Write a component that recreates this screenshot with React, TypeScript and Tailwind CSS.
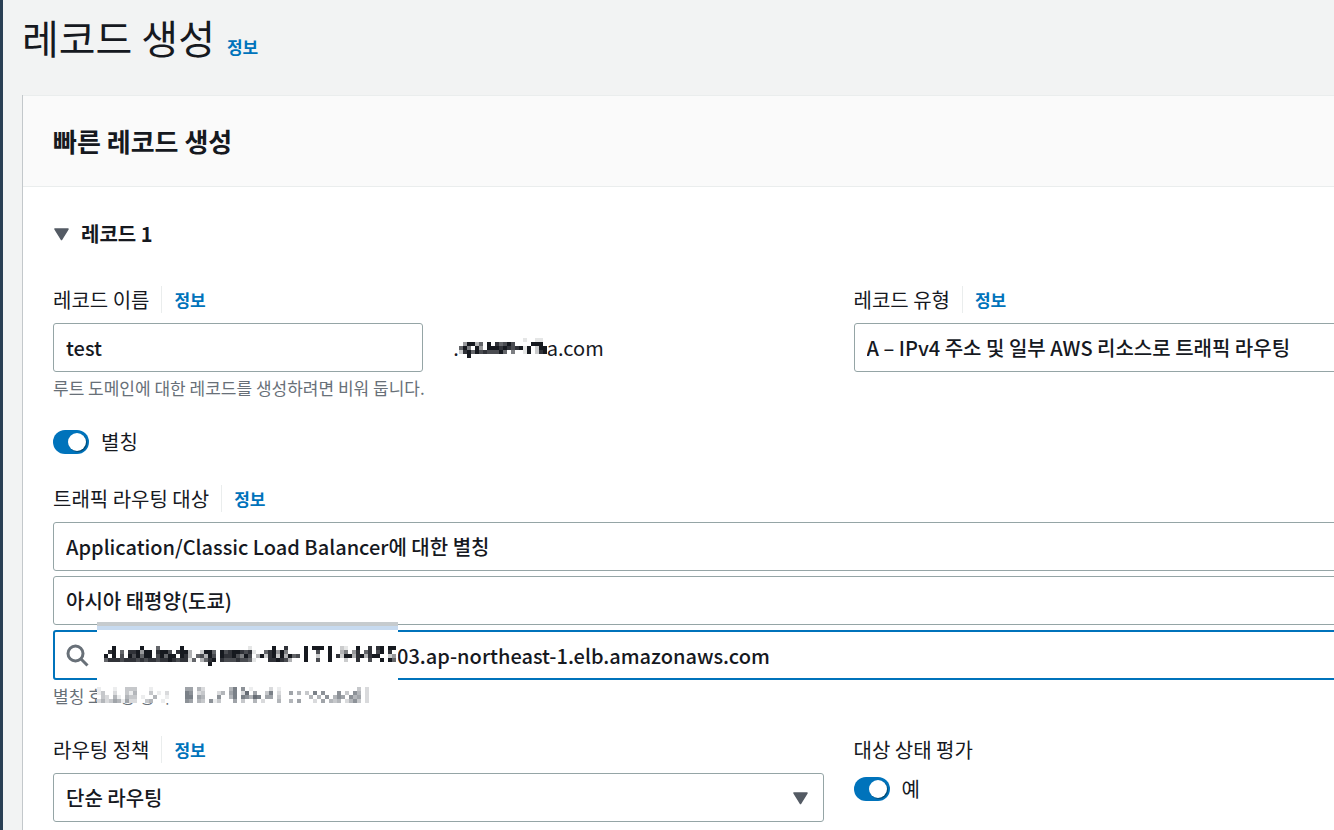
import { ReactNode, useState } from 'react';

const CELL = 4;

const DOMAIN_ROWS = [
  '0000000000000000100110',
  '0499360908679700009990',
  '6950940999898789190299',
  '2896978777960500190289',
  '0090000000000000000000',
];

const TARGET_ROWS = [
  '00900000090006000009000' + '0000000000000100000900800' + '0090999090021009008089099',
  '08906088949908997089930' + '0299609789987810068949500' + '0090070090035048068079080',
  '90907097969907969909830' + '6739709889759703928929396' + '7090020090829938938990024',
  '68887888787887889878816' + '0368908777877610008898730' + '0090070090002008007009096',
  '00000000000000000000000' + '0009000000000000000000000' + '0000000000000000000000000',
];

const ZONE_ROWS = [
  '10001003330001000000005504200000047060100002010000000000000000000302',
  '13002003140003010200007602300024057028050037020050403070600060306402',
  '03204104330100400100007705400060047076487055030000000404060465064502',
  '24235415220034001000006504306130005030040200040040500020504340246302',
];

function Mosaic({ rows, color }: { rows: string[]; color: string }) {
  const width = rows[0].length * CELL;
  const height = rows.length * CELL;
  return (
    <svg
      width={width}
      height={height}
      viewBox={`0 0 ${width} ${height}`}
      shapeRendering="crispEdges"
      className="block shrink-0"
      aria-hidden="true"
    >
      <rect width={width} height={height} fill="#fff" />
      {rows.flatMap((row, y) =>
        row.split('').map((level, x) =>
          level === '0' ? null : (
            <rect
              key={`${x}-${y}`}
              x={x * CELL}
              y={y * CELL}
              width={CELL}
              height={CELL}
              fill={color}
              opacity={Number(level) / 9}
            />
          )
        )
      )}
    </svg>
  );
}

function Triangle() {
  return (
    <svg width="16" height="14" viewBox="0 0 16 14" className="block shrink-0" aria-hidden="true">
      <path d="M2 2h13L8.500 12.500z" fill="#545b64" stroke="#545b64" strokeWidth="1.5" strokeLinejoin="round" />
    </svg>
  );
}

function InfoLink() {
  return (
    <a href="#info" className="text-[17px] font-bold text-[#0073bb]">
      정보
    </a>
  );
}

function FieldLabel({ htmlFor, children }: { htmlFor: string; children: ReactNode }) {
  return (
    <div className="mb-[10px] flex h-[27px] items-center">
      <label htmlFor={htmlFor}>{children}</label>
      <span className="ml-3 flex h-full items-center border-l border-[#eaeded] pl-3">
        <InfoLink />
      </span>
    </div>
  );
}

function Select({ id, label, value }: { id: string; label?: string; value: string }) {
  return (
    <div className="grid items-center">
      <select
        id={id}
        aria-label={label}
        className="col-start-1 row-start-1 h-[49px] w-full appearance-none rounded-[3px] border border-[#95a5a6] bg-white px-3 font-medium text-[#16191f]"
      >
        <option>{value}</option>
      </select>
      <span className="pointer-events-none col-start-1 row-start-1 mr-4 justify-self-end">
        <Triangle />
      </span>
    </div>
  );
}

function Toggle({ label }: { label: string }) {
  const [checked, setChecked] = useState(true);
  return (
    <label className="flex w-fit items-center gap-3">
      <input
        type="checkbox"
        role="switch"
        checked={checked}
        onChange={(e) => setChecked(e.target.checked)}
        className="flex h-6 w-9 appearance-none items-center rounded-full bg-[#879596] px-[3px] before:size-[18px] before:rounded-full before:bg-white before:shadow-[1px_1px_1px_rgba(0,28,36,0.5)] checked:justify-end checked:bg-[#0073bb]"
      />
      {label}
    </label>
  );
}

export default function App() {
  const [name, setName] = useState('test');
  const [target, setTarget] = useState('03.ap-northeast-1.elb.amazonaws.com');

  return (
    <div className="flex min-h-screen flex-col overflow-hidden border-l-3 border-[#2a3f54] bg-[#f2f3f3] pl-[19px] font-['Noto_Sans_CJK_KR',sans-serif] text-[20px] leading-7 text-[#16191f]">
      <header className="flex h-[95px] items-baseline gap-3 pt-[7px]">
        <h1 className="text-[40px] leading-[60px]">레코드 생성</h1>
        <InfoLink />
      </header>

      <main className="-mr-80 flex-1 border-l border-[#c3c8cb] bg-white">
        <div className="flex h-[92px] items-center border-y border-[#eaeded] bg-[#fafafa] px-[30px]">
          <h2 className="text-[26px] font-bold">빠른 레코드 생성</h2>
        </div>

        <form className="px-[30px] pt-[33px]">
          <button type="button" className="flex items-center gap-3 font-bold">
            <Triangle />
            레코드 1
          </button>

          <div className="mt-[38px] grid grid-cols-2 gap-[30px]">
            <div>
              <FieldLabel htmlFor="record-name">레코드 이름</FieldLabel>
              <div className="grid grid-cols-2 items-center gap-[30px]">
                <input
                  id="record-name"
                  value={name}
                  onChange={(e) => setName(e.target.value)}
                  className="h-[49px] w-full rounded-[3px] border border-[#95a5a6] bg-white px-3 font-medium"
                />
                <div className="flex items-center">
                  .
                  <Mosaic rows={DOMAIN_ROWS} color="#16191f" />
                  a.com
                </div>
              </div>
              <p className="mt-1 text-[17px] leading-6 text-[#687078]">
                루트 도메인에 대한 레코드를 생성하려면 비워 둡니다.
              </p>
            </div>
            <div>
              <FieldLabel htmlFor="record-type">레코드 유형</FieldLabel>
              <Select id="record-type" value="A – IPv4 주소 및 일부 AWS 리소스로 트래픽 라우팅" />
            </div>
          </div>

          <div className="mt-7">
            <Toggle label="별칭" />
          </div>

          <div className="mt-[29px]">
            <FieldLabel htmlFor="endpoint">트래픽 라우팅 대상</FieldLabel>
            <div className="flex flex-col gap-[5px]">
              <Select id="endpoint" value="Application/Classic Load Balancer에 대한 별칭" />
              <Select id="region" label="리전" value="아시아 태평양(도쿄)" />
              <div className="relative">
                <svg
                  width="24"
                  height="24"
                  viewBox="0 0 24 24"
                  fill="none"
                  stroke="#687078"
                  strokeWidth="3"
                  className="absolute top-[13px] left-3"
                  aria-hidden="true"
                >
                  <circle cx="10.5" cy="10.5" r="7.5" />
                  <path d="M16 16l6.500 6.500" />
                </svg>
                <input
                  aria-label="로드 밸런서"
                  value={target}
                  onChange={(e) => setTarget(e.target.value)}
                  className="block h-[50px] w-full rounded-[3px] border-2 border-[#0073bb] bg-white pr-3 pl-[342px] font-medium"
                />
                <div className="absolute -top-2 left-11 h-[62px] w-[301px] border-t-4 border-[#c6cbce] bg-white">
                  <div className="h-1 bg-[#c7daef]" />
                  <div className="pt-4 pl-[7px]">
                    <Mosaic rows={TARGET_ROWS} color="#16191f" />
                  </div>
                </div>
              </div>
            </div>
            <div className="relative mt-1 text-[17px] leading-6 text-[#687078]">
              별칭 호스팅 영역
              <div className="absolute top-[3px] left-11">
                <Mosaic rows={ZONE_ROWS} color="#545b64" />
              </div>
            </div>
          </div>

          <div className="mt-7 grid grid-cols-2 gap-[30px] pb-2">
            <div>
              <FieldLabel htmlFor="routing-policy">라우팅 정책</FieldLabel>
              <Select id="routing-policy" value="단순 라우팅" />
            </div>
            <div>
              <p className="mb-[11px]">대상 상태 평가</p>
              <Toggle label="예" />
            </div>
          </div>
        </form>
      </main>
    </div>
  );
}
